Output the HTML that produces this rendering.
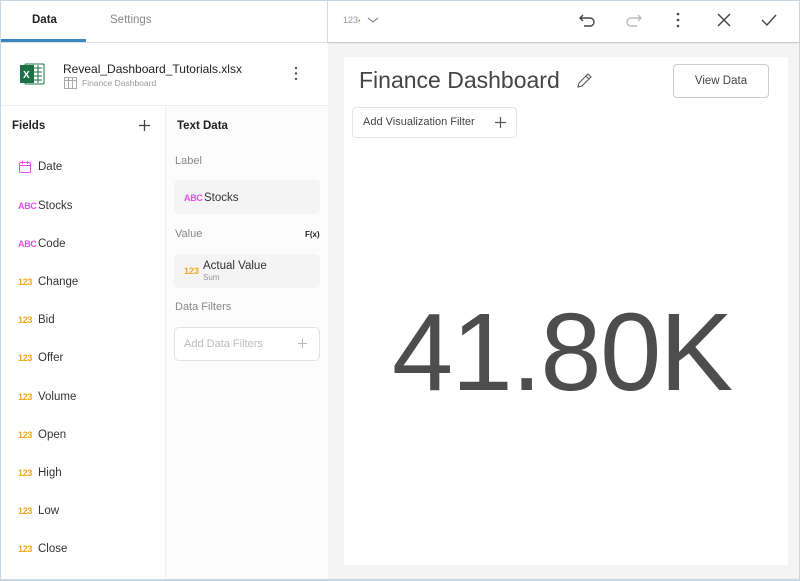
<!DOCTYPE html>
<html><head><meta charset="utf-8"><style>
*{box-sizing:border-box;margin:0;padding:0}
body{width:800px;height:581px;overflow:hidden;font-family:"Liberation Sans",sans-serif;background:#fff;position:relative;color:#333}
.abs{position:absolute}
.frame{position:absolute;left:0;top:0;width:800px;height:581px;border:1px solid #c9d7e2;border-bottom:2px solid #c9d7e2;pointer-events:none;z-index:10}
.fld{position:absolute;left:18px;font-size:11.5px;color:#333;display:flex;align-items:center}
.ic{font-size:9px;font-weight:bold;margin-right:5px;width:15px;letter-spacing:-0.3px}
.o{color:#f7a51c}.p{color:#e64fe6}
</style></head><body>
<div class="frame"></div>
<div class="abs" style="left:0;top:0;width:328px;height:43px;border-bottom:1px solid #ddd;border-right:1px solid #e4e4e4"></div>
<div class="abs" style="left:32px;top:14px;font-size:11.5px;font-weight:bold;color:#222">Data</div>
<div class="abs" style="left:110px;top:14px;font-size:11.5px;color:#888">Settings</div>
<div class="abs" style="left:1px;top:39px;width:85px;height:3px;background:#3b86c6"></div>
<div class="abs" style="left:328px;top:0;width:472px;height:43px;border-bottom:1px solid #ccc;box-shadow:0 1px 2px rgba(0,0,0,.12)"></div>
<div class="abs" style="left:343px;top:15px;font-size:9px;color:#999">123<span style="color:#4c4;font-size:7px">•</span></div>
<svg class="abs" style="left:367px;top:15px" width="12" height="10"><path d="M1 3l5 4 5-4" stroke="#888" fill="none" stroke-width="1.2"/></svg>
<svg class="abs" style="left:578px;top:10px" width="20" height="20"><path d="M5 5 L2 8 L5 11 M2 8 H12 a4 4 0 0 1 0 8 H6" stroke="#444" fill="none" stroke-width="1.4"/></svg>
<svg class="abs" style="left:623px;top:10px" width="20" height="20"><path d="M15 5 L18 8 L15 11 M18 8 H8 a4 4 0 0 0 0 8 H14" stroke="#bbb" fill="none" stroke-width="1.4"/></svg>
<svg class="abs" style="left:672px;top:11px" width="12" height="18"><circle cx="6" cy="3" r="1.3" fill="#444"/><circle cx="6" cy="9" r="1.3" fill="#444"/><circle cx="6" cy="15" r="1.3" fill="#444"/></svg>
<svg class="abs" style="left:716px;top:12px" width="16" height="16"><path d="M2 2L14 14M14 2L2 14" stroke="#444" stroke-width="1.4"/></svg>
<svg class="abs" style="left:760px;top:12px" width="18" height="16"><path d="M2 8l5 5L16 3" stroke="#444" fill="none" stroke-width="1.4"/></svg>
<svg class="abs" style="left:19px;top:62px" width="26" height="24"><rect x="6" y="2" width="19" height="20" rx="1" fill="#fff" stroke="#1d7044"/><path d="M15 6h8M15 10h8M15 14h8M15 18h8M19 3v18" stroke="#1d7044" stroke-width="1"/><rect x="1" y="3" width="14" height="18" fill="#1d7044"/><text x="4" y="16" font-size="10" font-weight="bold" fill="#fff" font-family="Liberation Sans">X</text></svg>
<div class="abs" style="left:63px;top:62px;font-size:12px;color:#222">Reveal_Dashboard_Tutorials.xlsx</div>
<svg class="abs" style="left:64px;top:77px" width="13" height="12"><rect x=".5" y=".5" width="12" height="11" fill="none" stroke="#aaa"/><path d="M.5 3.5h12M4.5 .5v11M8.5 .5v11" stroke="#aaa"/></svg>
<div class="abs" style="left:82px;top:78px;font-size:8.5px;color:#999">Finance Dashboard</div>
<svg class="abs" style="left:292px;top:66px" width="8" height="16"><circle cx="4" cy="2" r="1.2" fill="#555"/><circle cx="4" cy="7.5" r="1.2" fill="#555"/><circle cx="4" cy="13" r="1.2" fill="#555"/></svg>
<div class="abs" style="left:0;top:105px;width:328px;height:1px;background:#eee"></div>
<div class="abs" style="left:165px;top:106px;width:163px;height:473px;background:#fcfcfc;border-left:1px solid #eee"></div>
<div class="abs" style="left:12px;top:120px;font-size:11.5px;font-weight:bold;color:#222">Fields</div>
<svg class="abs" style="left:138px;top:119px" width="13" height="13"><path d="M6.5 1v11M1 6.5h11" stroke="#444" stroke-width="1.3"/></svg>
<div class="abs" style="left:177px;top:120px;font-size:11.5px;font-weight:bold;color:#222">Text Data</div>
<div class="fld" style="top:160px"><svg width="15" height="14" style="margin-right:5px"><rect x="1.5" y="2.5" width="11" height="10" rx="1" fill="none" stroke="#e64fe6"/><path d="M1.5 5.5h11M4.5 1v3M9.5 1v3" stroke="#e64fe6"/></svg>Date</div>
<div class="fld" style="top:200px"><span class="ic p">ABC</span>Stocks</div>
<div class="fld" style="top:238px"><span class="ic p">ABC</span>Code</div>
<div class="fld" style="top:276px"><span class="ic o">123</span>Change</div>
<div class="fld" style="top:314px"><span class="ic o">123</span>Bid</div>
<div class="fld" style="top:352px"><span class="ic o">123</span>Offer</div>
<div class="fld" style="top:391px"><span class="ic o">123</span>Volume</div>
<div class="fld" style="top:429px"><span class="ic o">123</span>Open</div>
<div class="fld" style="top:467px"><span class="ic o">123</span>High</div>
<div class="fld" style="top:505px"><span class="ic o">123</span>Low</div>
<div class="fld" style="top:543px"><span class="ic o">123</span>Close</div>
<div class="abs" style="left:175px;top:155px;font-size:11px;color:#888">Label</div>
<div class="abs" style="left:174px;top:180px;width:146px;height:34px;background:#f4f4f4;border-radius:5px"></div>
<div class="fld" style="left:184px;top:192px"><span class="ic p">ABC</span>Stocks</div>
<div class="abs" style="left:175px;top:228px;font-size:11px;color:#888">Value</div>
<div class="abs" style="left:305px;top:230px;font-size:8px;font-weight:bold;color:#222">F(x)</div>
<div class="abs" style="left:174px;top:254px;width:146px;height:34px;background:#f4f4f4;border-radius:5px"></div>
<div class="abs" style="left:184px;top:266px;font-size:9px;font-weight:bold;color:#f7a51c">123</div>
<div class="abs" style="left:203px;top:260px;font-size:11.5px;color:#333">Actual Value</div>
<div class="abs" style="left:203px;top:273px;font-size:8px;color:#999">Sum</div>
<div class="abs" style="left:175px;top:301px;font-size:11px;color:#888">Data Filters</div>
<div class="abs" style="left:174px;top:327px;width:146px;height:34px;border:1px solid #e2e2e2;border-radius:5px;background:#fff"></div>
<div class="abs" style="left:184px;top:338px;font-size:11px;color:#bbb">Add Data Filters</div>
<svg class="abs" style="left:297px;top:338px" width="11" height="11"><path d="M5.5 1v9M1 5.5h9" stroke="#bbb" stroke-width="1.1"/></svg>
<div class="abs" style="left:328px;top:44px;width:472px;height:535px;background:#f4f4f4"></div>
<div class="abs" style="left:344px;top:57px;width:444px;height:508px;background:#fff"></div>
<div class="abs" style="left:359px;top:67px;font-size:23px;color:#444">Finance Dashboard</div>
<svg class="abs" style="left:575px;top:72px" width="18" height="18"><path d="M3 15l1-4 9-9 3 3-9 9z M11 4l3 3" stroke="#555" fill="none" stroke-width="1.1"/></svg>
<div class="abs" style="left:673px;top:64px;width:96px;height:34px;border:1px solid #ccc;border-radius:4px;font-size:11.5px;color:#444;text-align:center;line-height:32px">View Data</div>
<div class="abs" style="left:352px;top:107px;width:165px;height:31px;border:1px solid #e6e6e6;border-radius:4px"></div>
<div class="abs" style="left:363px;top:116px;font-size:11px;color:#444">Add Visualization Filter</div>
<svg class="abs" style="left:494px;top:116px" width="13" height="13"><path d="M6.5 1v11M1 6.5h11" stroke="#555" stroke-width="1.2"/></svg>
<div class="abs" style="left:392px;top:298px;font-size:110px;color:#4d4d4d;letter-spacing:-1.5px;line-height:1">41.80K</div>
</body></html>
